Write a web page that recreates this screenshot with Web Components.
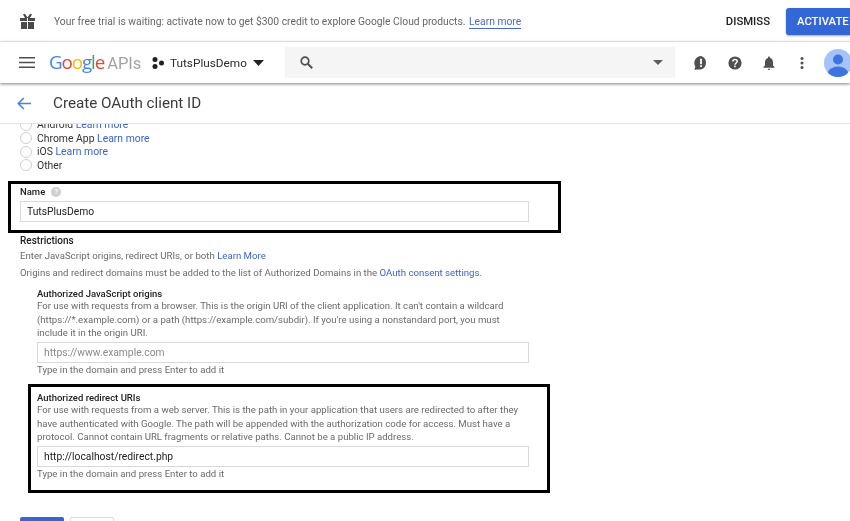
<!DOCTYPE html>
<html>
<head>
<meta charset="utf-8">
<title>Create OAuth client ID</title>
<style>
  html, body { margin: 0; height: 521px; overflow: hidden; background: #fff; }
  body { font-family: Roboto, "Liberation Sans", sans-serif; color: #212121; filter: blur(.3px); }
</style>
</head>
<body>
<trial-banner>
  Your free trial is waiting: activate now to get $300 credit to explore Google Cloud products.
</trial-banner>
<app-header project="TutsPlusDemo"></app-header>
<page-title>Create OAuth client ID</page-title>
<oauth-form></oauth-form>

<script>
// Top strip with the free trial message
class TrialBanner extends HTMLElement {
  constructor() {
    super();
    const shadow = this.attachShadow({ mode: "open" });
    shadow.innerHTML = `
      <style>
        :host { display: flex; align-items: center; height: 42px; padding-left: 19px; font-size: 10.3px; color: #666; overflow: hidden; }
        svg { width: 17px; height: 17px; margin-right: 18px; flex: none; }
        .msg { flex: 1; white-space: nowrap; }
        a { color: #4a69cf; text-decoration: none; border-bottom: 1px solid #4a69cf; margin-left: 1px; }
        .dismiss { font-size: 11.3px; font-weight: 500; color: #212121; margin-right: 16px; }
        .activate { box-sizing: border-box; width: 64px; height: 27px; padding-left: 11px; line-height: 27px; background: #3367d6; color: #fff; font-size: 11.3px; font-weight: 500; border-radius: 3px 0 0 3px; box-shadow: 0 1px 2px rgba(0,0,0,.35); flex: none; white-space: nowrap; overflow: hidden; }
      </style>
      <svg viewBox="0 0 17 17"><path fill="#4a4a4a" d="M1 5h7v3H1zM9 5h7v3H9zM2 9h6v7H2zM9 9h6v7H9zM4 1.2 6 .8 8.5 4.5 11 .8l2 .4L11 5H6z"/></svg>
      <span class="msg"><slot></slot> <a>Learn more</a></span>
      <span class="dismiss">DISMISS</span>
      <span class="activate">ACTIVATE</span>`;
  }
}

// Main bar: menu, logo, project picker, search and action icons
class AppHeader extends HTMLElement {
  constructor() {
    super();
    const shadow = this.attachShadow({ mode: "open" });
    shadow.innerHTML = `
      <style>
        :host { display: flex; align-items: center; position: relative; z-index: 2; height: 41px; padding-left: 19px; background: #fff; box-shadow: 0 1px 3px rgba(0,0,0,.5), 0 -1px 1px rgba(0,0,0,.05); }
        svg { display: block; flex: none; }
        .logo { font-family: "Open Sans", Roboto, sans-serif; font-size: 18.8px; letter-spacing: -1.1px; margin-left: 14px; width: 103px; flex: none; white-space: nowrap; line-height: 1; }
        .logo .apis { color: #a2a2a2; margin-left: 3px; font-family: Roboto, sans-serif; letter-spacing: 0; font-size: 16.5px; }
        .project { display: flex; align-items: center; flex: none; font-size: 11.8px; color: #2b2b2b; }
        .project span { margin: 0 7px 0 6px; width: 76px; white-space: nowrap; }
        .search { display: flex; align-items: center; justify-content: space-between; flex: none; box-sizing: border-box; width: 390px; height: 31px; margin-left: 21px; padding: 0 12px 0 15px; background: #f5f5f5; }
        .actions { display: flex; align-items: center; flex: none; margin-left: 19px; }
        .avatar { width: 28px; height: 28px; margin-left: 20px; border-radius: 50%; overflow: hidden; flex: none; }
      </style>
      <svg width="16" height="11" viewBox="0 0 16 11"><path fill="#4f4f4f" d="M0 0h16v1.6H0zM0 4.7h16v1.6H0zM0 9.4h16V11H0z"/></svg>
      <div class="logo"><span style="color:#4285f4">G</span><span style="color:#ea4335">o</span><span style="color:#fbbc05">o</span><span style="color:#4285f4">g</span><span style="color:#34a853">l</span><span style="color:#ea4335">e</span><span class="apis">APIs</span></div>
      <div class="project">
        <svg width="12" height="12" viewBox="0 0 12 12"><circle cx="3" cy="2.5" r="2.5" fill="#222"/><circle cx="3" cy="9.5" r="2.5" fill="#222"/><circle cx="9.5" cy="6" r="2.5" fill="#222"/></svg>
        <span>${this.getAttribute("project")}</span>
        <svg width="11" height="6" viewBox="0 0 11 6"><path fill="#222" d="M0 0h11L5.5 6z"/></svg>
      </div>
      <div class="search">
        <svg width="13" height="13" viewBox="0 0 13 13"><circle cx="5" cy="5" r="3.8" fill="none" stroke="#505050" stroke-width="1.7"/><path d="M8 8l4.2 4.2" stroke="#505050" stroke-width="2"/></svg>
        <svg width="10" height="5" viewBox="0 0 10 5"><path fill="#5f5f5f" d="M0 0h10L5 5z"/></svg>
      </div>
      <div class="actions">
        <svg width="14" height="14" viewBox="0 0 14 14"><path fill="#505050" d="M7 0a7 7 0 0 1 0 13.4H3L.5 14l.8-3.4A7 7 0 0 1 7 0z"/><path fill="#fff" d="M6.100 2.800h1.800v5.400H6.100zM6.100 9.200h1.800V11H6.100z"/></svg>
        <svg width="14" height="14" viewBox="0 0 14 14" style="margin-left:20px"><circle cx="7" cy="7" r="6.600" fill="#505050"/><path fill="none" stroke="#fff" stroke-width="1.500" d="M4.800 5.400C4.800 4 5.800 3.400 7 3.400s2.200.8 2.200 2C9.200 7 7 7 7 8.800"/><rect x="6.200" y="9.600" width="1.600" height="1.600" fill="#fff"/></svg>
        <svg width="12" height="14" viewBox="0 0 12 14" style="margin-left:21px"><path fill="#505050" d="M6 .4c.6 0 1 .4 1 1v.6c2 .5 3 2.200 3 4.200v3.300l1.600 1.600v.7H.4v-.7L2 9.500V6.200C2 4.200 3 2.500 5 2v-.6c0-.6.4-1 1-1zM4.700 12.700h2.600A1.300 1.300 0 0 1 4.700 12.700z"/></svg>
        <svg width="4" height="12" viewBox="0 0 4 12" style="margin-left:25px"><circle cx="2" cy="1.500" r="1.500" fill="#505050"/><circle cx="2" cy="6" r="1.500" fill="#505050"/><circle cx="2" cy="10.500" r="1.500" fill="#505050"/></svg>
        <div class="avatar"><svg width="28" height="28" viewBox="0 0 28 28"><rect width="28" height="28" fill="#a5c3f8"/><circle cx="14" cy="10.500" r="5" fill="#3f73e0"/><ellipse cx="14" cy="24" rx="10" ry="6.500" fill="#3f73e0"/></svg></div>
      </div>`;
  }
}

// Row with the back arrow and the heading
class PageTitle extends HTMLElement {
  constructor() {
    super();
    const shadow = this.attachShadow({ mode: "open" });
    shadow.innerHTML = `
      <style>
        :host { display: flex; align-items: center; box-sizing: border-box; height: 41px; padding-left: 17px; border-bottom: 1px solid #e4e4e4; font-size: 15.2px; color: #3c3c3c; position: relative; z-index: 1; background: #fff; }
        svg { margin-right: 22px; }
      </style>
      <svg width="14" height="13" viewBox="0 0 14 13"><path fill="none" stroke="#4a80e8" stroke-width="1.600" d="M14 6.500H1.500M6.800 1 1.300 6.500l5.500 5.500"/></svg>
      <slot></slot>`;
  }
}

class RadioOption extends HTMLElement {
  constructor() {
    super();
    const shadow = this.attachShadow({ mode: "open" });
    shadow.innerHTML = `
      <style>
        :host { display: flex; align-items: center; height: 13.500px; font-size: 10.4px; color: #333; }
        i { box-sizing: border-box; width: 12px; height: 12px; margin-right: 5px; border: 1px solid #cfcfcf; border-radius: 50%; background: #fff; }
      </style>
      <i></i><span><slot></slot></span>`;
  }
}

class TextBox extends HTMLElement {
  constructor() {
    super();
    const shadow = this.attachShadow({ mode: "open" });
    shadow.innerHTML = `
      <style>
        :host { display: flex; align-items: center; box-sizing: border-box; width: 509px; height: 21px; padding-left: 6px; border: 1px solid #d9d9d9; background: #fff; font-size: 10.3px; color: #212121; }
        :host([placeholder]) { color: #8a8a8a; }
      </style>
      <slot></slot>`;
  }
}

// Label, help, input and hint of one URI section
class UriField extends HTMLElement {
  constructor() {
    super();
    const shadow = this.attachShadow({ mode: "open" });
    shadow.innerHTML = `
      <style>
        :host { display: block; font-size: 9.620px; color: #6a6a6a; }
        h4 { margin: 0; height: 11px; line-height: 11px; font-size: 9.500px; font-weight: 500; color: #212121; }
        p { margin: 0 0 2.500px; width: 491px; line-height: 13.500px; }
        .hint { line-height: 13px; }
        ::slotted(text-box) { width: 492px; }
      </style>
      <h4>${this.getAttribute("label")}</h4>
      <p><slot name="help"></slot></p>
      <slot name="input"></slot>
      <div class="hint">Type in the domain and press Enter to add it</div>`;
  }
}

// Black marker the author of the screenshot drew round a section
class MarkBox extends HTMLElement {
  constructor() {
    super();
    const shadow = this.attachShadow({ mode: "open" });
    shadow.innerHTML = `
      <style>
        :host { display: block; box-sizing: border-box; border: 3px solid #000; }
      </style>
      <slot></slot>`;
  }
}

class OauthForm extends HTMLElement {
  constructor() {
    super();
    const shadow = this.attachShadow({ mode: "open" });
    shadow.innerHTML = `
      <style>
        :host { display: block; height: 397px; overflow: hidden; }
        a { color: #3b62d0; text-decoration: none; }
        .form { margin-top: -6px; padding-left: 20px; }
        .name { width: 553px; height: 52px; margin: 9px 0 0 -12px; padding-left: 9px; }
        .name label { display: flex; align-items: center; height: 15px; margin-bottom: 2px; font-size: 9.500px; font-weight: 500; color: #212121; }
        .q { width: 10px; height: 10px; margin-left: 6px; border-radius: 50%; background: #cfcfcf; color: #fff; font-size: 8px; line-height: 10px; text-align: center; }
        h3 { margin: 0; padding-top: 1px; height: 14px; line-height: 14px; font-size: 10px; font-weight: 500; color: #212121; }
        .intro { margin: 0; height: 17px; line-height: 15px; font-size: 9.620px; color: #6a6a6a; }
        .origins { margin: 6px 0 0 17px; }
        .redirect { width: 522px; height: 109px; margin: 8px 0 0 8px; padding: 5px 0 0 6px; }
        .buttons { display: flex; gap: 6px; margin-top: 24px; }
        .buttons i { display: block; width: 44px; height: 20px; border-radius: 2px; background: #3367d6; }
        .buttons i + i { box-sizing: border-box; border: 1px solid #d9d9d9; background: #fff; }
      </style>
      <div class="form">
        <div>
          <radio-option>Android <a>Learn more</a></radio-option>
          <radio-option>Chrome App <a>Learn more</a></radio-option>
          <radio-option>iOS <a>Learn more</a></radio-option>
          <radio-option>Other</radio-option>
        </div>
        <mark-box class="name">
          <label>Name <span class="q">?</span></label>
          <text-box>TutsPlusDemo</text-box>
        </mark-box>
        <h3>Restrictions</h3>
        <p class="intro">Enter JavaScript origins, redirect URIs, or both <a>Learn More</a></p>
        <p class="intro">Origins and redirect domains must be added to the list of Authorized Domains in the <a>OAuth consent settings.</a></p>
        <uri-field class="origins" label="Authorized JavaScript origins">
          <span slot="help">For use with requests from a browser. This is the origin URI of the client application. It can't contain a wildcard (https://*.example.com) or a path (https://example.com/subdir). If you're using a nonstandard port, you must include it in the origin URI.</span>
          <text-box slot="input" placeholder>https://www.example.com</text-box>
        </uri-field>
        <mark-box class="redirect">
          <uri-field label="Authorized redirect URIs">
            <span slot="help">For use with requests from a web server. This is the path in your application that users are redirected to after they have authenticated with Google. The path will be appended with the authorization code for access. Must have a protocol. Cannot contain URL fragments or relative paths. Cannot be a public IP address.</span>
            <text-box slot="input">http://localhost/redirect.php</text-box>
          </uri-field>
        </mark-box>
        <div class="buttons"><i></i><i></i></div>
      </div>`;
  }
}

customElements.define("trial-banner", TrialBanner);
customElements.define("app-header", AppHeader);
customElements.define("page-title", PageTitle);
customElements.define("radio-option", RadioOption);
customElements.define("text-box", TextBox);
customElements.define("uri-field", UriField);
customElements.define("mark-box", MarkBox);
customElements.define("oauth-form", OauthForm);
</script>
</body>
</html>
